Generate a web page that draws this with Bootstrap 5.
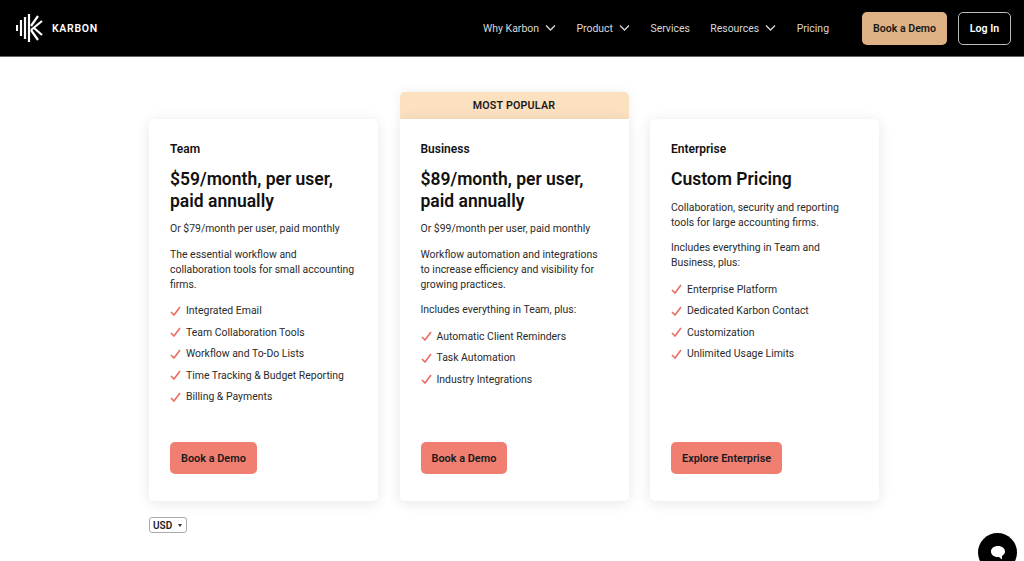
<!DOCTYPE html>
<html lang="en">
<head>
<meta charset="utf-8">
<title>Karbon Pricing</title>
<link href="https://cdn.jsdelivr.net/npm/bootstrap@5.3.0/dist/css/bootstrap.min.css" rel="stylesheet">
<style>
html,body{height:561px;overflow:hidden}
body{font-family:Roboto,"Liberation Sans",sans-serif;font-size:10.45px;line-height:15px;color:#2b2b2b;background:#fff}
.top-bar{height:57px;background:#000;border-bottom:1px solid #666;padding:0 13px 0 16px}
.brand-link{color:#fff;text-decoration:none;font-size:10.5px;font-weight:600;letter-spacing:.7px;gap:8px}
.menu-link{color:#d8d8d8;font-size:10.45px;text-decoration:none;gap:6px;margin-right:20.5px}
.menu-link svg{width:11px;height:6px}
.demo-btn,.login-btn{height:33px;border-radius:5px;font-size:10.6px;font-weight:600;display:flex;align-items:center;justify-content:center;text-decoration:none}
.demo-btn{width:85px;background:#deb284;color:#1a1a1a;margin-left:12.500px;margin-right:11px}
.login-btn{width:53px;border:1px solid #bbb;color:#fff}
.plans{width:730px;margin:35px auto 0 149px;display:grid;grid-template-columns:repeat(3,229px);column-gap:21.5px;align-items:end}
.plan-wrap{display:flex;flex-direction:column}
.plan-flag{height:27px;background:#fbe1bf;border-radius:5px 5px 0 0;font-size:10.7px;font-weight:600;color:#1a1a1a;display:flex;align-items:center;justify-content:center;letter-spacing:.2px;box-shadow:0 0 12px rgba(0,0,0,.07)}
.plan-box{height:382px;background:#fff;border-radius:5px;box-shadow:0 2px 14px rgba(0,0,0,.1);padding:22px 21px 27px;display:flex;flex-direction:column}
.plan-flag + .plan-box{border-radius:0 0 5px 5px}
.plan-name{font-size:12px;font-weight:600;color:#111;line-height:16px;margin-bottom:12px}
.plan-price{font-size:17.5px;line-height:21.5px;font-weight:600;color:#111;margin-bottom:9px}
.plan-box p{margin-bottom:10.5px}
.feat-list{list-style:none;padding:0;margin:-2px 0 0}
.feat-list li{height:21.5px;display:flex;align-items:center;gap:5px}
.feat-list svg{width:11px;height:10px;flex:none}
.plan-cta{align-self:flex-start;margin-top:auto;height:32px;padding:0 11px;background:#f07f72;border-radius:5px;color:#1a1a1a;font-size:10.9px;font-weight:600;display:flex;align-items:center;text-decoration:none}
.currency-pick{margin:16px 0 0 149px;width:38px;height:16px;border:1px solid #aaa;border-radius:3px;font-size:10px;font-weight:600;color:#222;display:flex;align-items:center;justify-content:space-between;padding:0 4px 0 3px}
.currency-pick i{border:2px solid transparent;border-top:3px solid #333;border-bottom:0}
.chat-bubble{position:fixed;left:978px;top:533px;width:39px;height:39px;border-radius:50%;background:#000;display:flex;align-items:flex-start;justify-content:center;padding-top:12px}
</style>
</head>
<body>
<nav class="top-bar d-flex align-items-center">
  <a class="brand-link d-flex align-items-center" href="#">
    <svg width="28" height="28" viewBox="0 0 28 28" fill="none" stroke="#fff" stroke-width="2.200">
      <path d="M1 11v6M5 6v16M9 3v22M13 0v28"/>
      <path d="M15 12 22 2M15 16 26 7M15 16l7 10M18 14l8 7"/>
    </svg>
    KARBON
  </a>
  <div class="ms-auto d-flex align-items-center">
    <a class="menu-link d-flex align-items-center" href="#">Why Karbon <svg viewBox="0 0 10 6" fill="none" stroke="#d8d8d8" stroke-width="1.300"><path d="M.5.500 5 5 9.500.5"/></svg></a>
    <a class="menu-link d-flex align-items-center" href="#">Product <svg viewBox="0 0 10 6" fill="none" stroke="#d8d8d8" stroke-width="1.300"><path d="M.5.500 5 5 9.500.5"/></svg></a>
    <a class="menu-link" href="#">Services</a>
    <a class="menu-link d-flex align-items-center" href="#">Resources <svg viewBox="0 0 10 6" fill="none" stroke="#d8d8d8" stroke-width="1.300"><path d="M.5.500 5 5 9.500.5"/></svg></a>
    <a class="menu-link" href="#">Pricing</a>
    <a class="demo-btn" href="#">Book a Demo</a>
    <a class="login-btn" href="#">Log In</a>
  </div>
</nav>
<main class="plans">
  <section class="plan-wrap">
    <div class="plan-box">
      <div class="plan-name">Team</div>
      <div class="plan-price">$59/month, per user, paid annually</div>
      <p>Or $79/month per user, paid monthly</p>
      <p>The essential workflow and collaboration tools for small accounting firms.</p>
      <ul class="feat-list">
        <li><svg viewBox="0 0 11 10" fill="none" stroke="#ea6d62" stroke-width="1.600"><path d="M1 6l3 3 6-8"/></svg>Integrated Email</li>
        <li><svg viewBox="0 0 11 10" fill="none" stroke="#ea6d62" stroke-width="1.600"><path d="M1 6l3 3 6-8"/></svg>Team Collaboration Tools</li>
        <li><svg viewBox="0 0 11 10" fill="none" stroke="#ea6d62" stroke-width="1.600"><path d="M1 6l3 3 6-8"/></svg>Workflow and To-Do Lists</li>
        <li><svg viewBox="0 0 11 10" fill="none" stroke="#ea6d62" stroke-width="1.600"><path d="M1 6l3 3 6-8"/></svg>Time Tracking &amp; Budget Reporting</li>
        <li><svg viewBox="0 0 11 10" fill="none" stroke="#ea6d62" stroke-width="1.600"><path d="M1 6l3 3 6-8"/></svg>Billing &amp; Payments</li>
      </ul>
      <a class="plan-cta" href="#">Book a Demo</a>
    </div>
  </section>
  <section class="plan-wrap">
    <div class="plan-flag">MOST POPULAR</div>
    <div class="plan-box">
      <div class="plan-name">Business</div>
      <div class="plan-price">$89/month, per user, paid annually</div>
      <p>Or $99/month per user, paid monthly</p>
      <p>Workflow automation and integrations to increase efficiency and visibility for growing practices.</p>
      <p>Includes everything in Team, plus:</p>
      <ul class="feat-list">
        <li><svg viewBox="0 0 11 10" fill="none" stroke="#ea6d62" stroke-width="1.600"><path d="M1 6l3 3 6-8"/></svg>Automatic Client Reminders</li>
        <li><svg viewBox="0 0 11 10" fill="none" stroke="#ea6d62" stroke-width="1.600"><path d="M1 6l3 3 6-8"/></svg>Task Automation</li>
        <li><svg viewBox="0 0 11 10" fill="none" stroke="#ea6d62" stroke-width="1.600"><path d="M1 6l3 3 6-8"/></svg>Industry Integrations</li>
      </ul>
      <a class="plan-cta" href="#">Book a Demo</a>
    </div>
  </section>
  <section class="plan-wrap">
    <div class="plan-box">
      <div class="plan-name">Enterprise</div>
      <div class="plan-price">Custom Pricing</div>
      <p>Collaboration, security and reporting tools for large accounting firms.</p>
      <p>Includes everything in Team and Business, plus:</p>
      <ul class="feat-list">
        <li><svg viewBox="0 0 11 10" fill="none" stroke="#ea6d62" stroke-width="1.600"><path d="M1 6l3 3 6-8"/></svg>Enterprise Platform</li>
        <li><svg viewBox="0 0 11 10" fill="none" stroke="#ea6d62" stroke-width="1.600"><path d="M1 6l3 3 6-8"/></svg>Dedicated Karbon Contact</li>
        <li><svg viewBox="0 0 11 10" fill="none" stroke="#ea6d62" stroke-width="1.600"><path d="M1 6l3 3 6-8"/></svg>Customization</li>
        <li><svg viewBox="0 0 11 10" fill="none" stroke="#ea6d62" stroke-width="1.600"><path d="M1 6l3 3 6-8"/></svg>Unlimited Usage Limits</li>
      </ul>
      <a class="plan-cta" href="#">Explore Enterprise</a>
    </div>
  </section>
</main>
<div class="currency-pick">USD <i></i></div>
<div class="chat-bubble"><svg width="16" height="15" viewBox="0 0 16 15"><path d="M8 1C3.800 1 1 3.400 1 6.500S3.800 12 7.500 12c.5 0 1 0 1.500-.1L12 14.500v-3.600c1.800-1 3-2.500 3-4.400C15 3.400 12.200 1 8 1z" fill="#fff"/></svg></div>
<script src="https://cdn.jsdelivr.net/npm/bootstrap@5.3.0/dist/js/bootstrap.bundle.min.js"></script>
</body>
</html>
